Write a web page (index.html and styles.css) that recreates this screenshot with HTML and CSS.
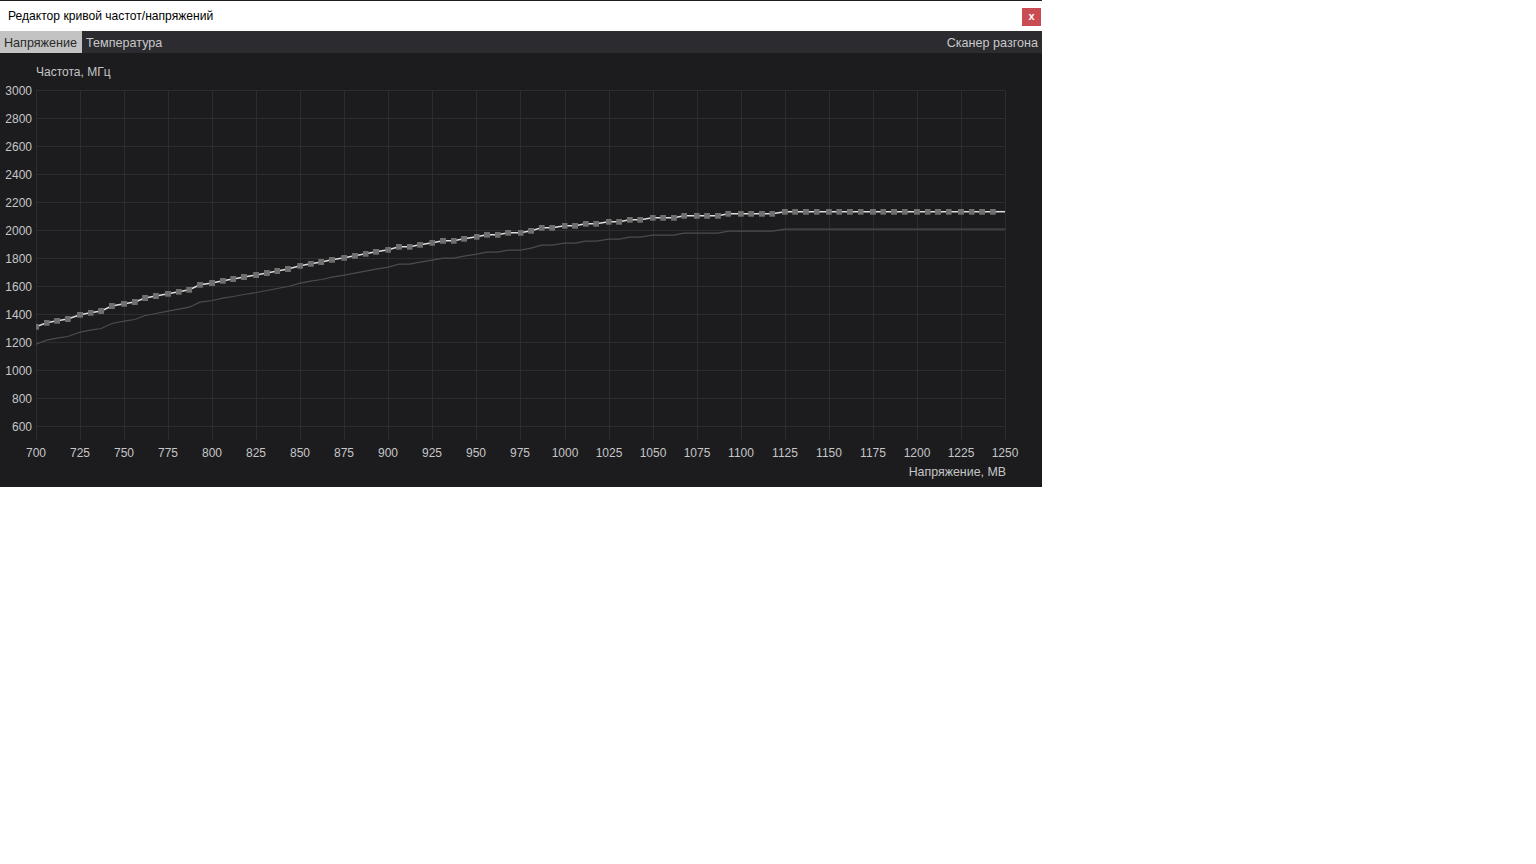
FILE: index.html
```html
<!DOCTYPE html>
<html lang="ru">
<head>
<meta charset="utf-8">
<title>Редактор кривой частот/напряжений</title>
<link rel="stylesheet" href="styles.css">
</head>
<body>
<div class="window">
  <div class="titlebar">
    <span class="title">Редактор кривой частот/напряжений</span>
    <div class="close">x</div>
  </div>
  <div class="tabs">
    <div class="tab active">Напряжение</div>
    <div class="tab">Температура</div>
    <div class="spacer"></div>
    <div class="tab">Сканер разгона</div>
  </div>
  <svg class="chart" width="1042" height="434" viewBox="0 53 1042 434" xmlns="http://www.w3.org/2000/svg">
    <defs>
      <clipPath id="plot"><rect x="36" y="80" width="970" height="370"/></clipPath>
      <marker id="sq" markerWidth="6" markerHeight="6" refX="3" refY="3" markerUnits="userSpaceOnUse" viewBox="0 0 6 6">
        <rect width="6" height="6" class="sqfill"/>
      </marker>
    </defs>
    <path class="grid" d="M36.5 90V440M80.5 90V440M124.5 90V440M168.5 90V440M212.5 90V440M256.5 90V440M300.5 90V440M344.5 90V440M388.5 90V440M432.5 90V440M476.5 90V440M520.5 90V440M565.5 90V440M609.5 90V440M653.5 90V440M697.5 90V440M741.5 90V440M785.5 90V440M829.5 90V440M873.5 90V440M917.5 90V440M961.5 90V440M1005.5 90V440M36 90.5H1006M36 118.5H1006M36 146.5H1006M36 174.5H1006M36 202.5H1006M36 230.5H1006M36 258.5H1006M36 286.5H1006M36 314.5H1006M36 342.5H1006M36 370.5H1006M36 398.5H1006M36 426.5H1006"/>
    <g class="ylabels">
      <text x="32" y="94.5">3000</text>
      <text x="32" y="122.5">2800</text>
      <text x="32" y="150.5">2600</text>
      <text x="32" y="178.5">2400</text>
      <text x="32" y="206.5">2200</text>
      <text x="32" y="234.5">2000</text>
      <text x="32" y="262.5">1800</text>
      <text x="32" y="290.5">1600</text>
      <text x="32" y="318.5">1400</text>
      <text x="32" y="346.5">1200</text>
      <text x="32" y="374.5">1000</text>
      <text x="32" y="402.5">800</text>
      <text x="32" y="430.5">600</text>
    </g>
    <g class="xlabels">
      <text x="36" y="456.5">700</text>
      <text x="80" y="456.5">725</text>
      <text x="124" y="456.5">750</text>
      <text x="168" y="456.5">775</text>
      <text x="212" y="456.5">800</text>
      <text x="256" y="456.5">825</text>
      <text x="300" y="456.5">850</text>
      <text x="344" y="456.5">875</text>
      <text x="388" y="456.5">900</text>
      <text x="432" y="456.5">925</text>
      <text x="476" y="456.5">950</text>
      <text x="520" y="456.5">975</text>
      <text x="565" y="456.5">1000</text>
      <text x="609" y="456.5">1025</text>
      <text x="653" y="456.5">1050</text>
      <text x="697" y="456.5">1075</text>
      <text x="741" y="456.5">1100</text>
      <text x="785" y="456.5">1125</text>
      <text x="829" y="456.5">1150</text>
      <text x="873" y="456.5">1175</text>
      <text x="917" y="456.5">1200</text>
      <text x="961" y="456.5">1225</text>
      <text x="1005" y="456.5">1250</text>
    </g>
    <text class="axis-title" x="36" y="75.5">Частота, МГц</text>
    <text class="axis-title end" x="1006" y="475.5">Напряжение, МВ</text>
    <g clip-path="url(#plot)">
      <polyline class="base-curve" transform="translate(0,17.5)" points="36,326.7 46.6,322.7 57.1,320.7 67.7,319 80,314.7 90.6,312.7 101.2,311 111.8,306 124.1,303.7 134.7,302 145.2,298 155.8,296 168.1,293.7 178.7,291.7 189.3,289.7 199.9,284.7 212.2,283 222.8,280.7 233.3,279 243.9,277 256.2,275 266.8,273 277.4,271 287.9,269 300.3,265.7 310.8,263.7 321.4,262 332,259.7 344.3,257.7 354.9,255.7 365.5,253.7 376,251.7 388.4,249.7 398.9,246.7 409.5,246.7 420.1,244.7 432.4,242.7 443,240.7 453.6,240.7 464.1,238.7 476.5,236.7 487,234.7 497.6,234.7 508.2,232.7 520.5,232.7 531.1,230.7 541.6,227.7 552.2,227.7 564.5,225.7 575.1,225.7 585.7,223.7 596.3,223.7 608.6,221.7 619.2,221.7 629.7,219.7 640.3,219.7 652.6,217.7 663.2,217.7 673.8,217.7 684.3,215.7 696.7,215.7 707.2,215.7 717.8,215.7 728.4,213.7 740.7,213.7 751.3,213.7 761.9,213.7 772.4,213.7 784.8,211.7 1005,211.7"/>
      <polyline class="curve" points="992.7,211.7 1005,211.7"/>
      <polyline class="curve pts" points="36,326.7 46.6,322.7 57.1,320.7 67.7,319 80,314.7 90.6,312.7 101.2,311 111.8,306 124.1,303.7 134.7,302 145.2,298 155.8,296 168.1,293.7 178.7,291.7 189.3,289.7 199.9,284.7 212.2,283 222.8,280.7 233.3,279 243.9,277 256.2,275 266.8,273 277.4,271 287.9,269 300.3,265.7 310.8,263.7 321.4,262 332,259.7 344.3,257.7 354.9,255.7 365.5,253.7 376,251.7 388.4,249.7 398.9,246.7 409.5,246.7 420.1,244.7 432.4,242.7 443,240.7 453.6,240.7 464.1,238.7 476.5,236.7 487,234.7 497.6,234.7 508.2,232.7 520.5,232.7 531.1,230.7 541.6,227.7 552.2,227.7 564.5,225.7 575.1,225.7 585.7,223.7 596.3,223.7 608.6,221.7 619.2,221.7 629.7,219.7 640.3,219.7 652.6,217.7 663.2,217.7 673.8,217.7 684.3,215.7 696.7,215.7 707.2,215.7 717.8,215.7 728.4,213.7 740.7,213.7 751.3,213.7 761.9,213.7 772.4,213.7 784.8,211.7 795.3,211.7 805.9,211.7 816.5,211.7 828.8,211.7 839.4,211.7 849.9,211.7 860.5,211.7 872.9,211.7 883.4,211.7 894,211.7 904.6,211.7 916.9,211.7 927.5,211.7 938,211.7 948.6,211.7 960.9,211.7 971.5,211.7 982.1,211.7 992.7,211.7"/>
    </g>
  </svg>
</div>
</body>
</html>
```

FILE: styles.css
```css
html, body {
  margin: 0;
  padding: 0;
  background: #ffffff;
}

.window {
  width: 1042px;
  display: flex;
  flex-direction: column;
  font-family: "Liberation Sans", Arial, sans-serif;
  font-size: 12px;
}

.titlebar {
  height: 30px;
  border-top: 1px solid #1f1f1f;
  background: #ffffff;
  display: flex;
  align-items: center;
  padding-left: 8px;
  padding-right: 1px;
}

.title {
  color: #000000;
  flex: 1;
  font-size: 12.1px;
}

.close {
  width: 19px;
  height: 18px;
  background: #c94c52;
  color: #ffffff;
  font-weight: bold;
  font-size: 11px;
  line-height: 17px;
  text-align: center;
  margin-top: 1px;
}

.tabs {
  height: 22px;
  background: #2b2b30;
  display: flex;
  align-items: stretch;
}

.tab {
  padding: 1px 4px 0;
  line-height: 23px;
  color: #c8c8c8;
  font-size: 12.6px;
  white-space: nowrap;
  height: 21px;
}

.tab.active {
  background: #c3c3c3;
  color: #2a2a2a;
  padding-right: 5px;
}

.spacer {
  flex: 1;
}

.chart {
  display: block;
  background: #1c1c1f;
}

.grid {
  stroke: #2d2d30;
  stroke-width: 1;
  fill: none;
}

.ylabels text,
.xlabels text,
.axis-title {
  font-family: "Liberation Sans", Arial, sans-serif;
  font-size: 12px;
  fill: #c6c6c6;
}

.axis-title.end {
  font-size: 12.4px;
  text-anchor: end;
}

.ylabels text {
  text-anchor: end;
}

.xlabels text {
  text-anchor: middle;
}

.base-curve {
  fill: none;
  stroke: #4c4c4e;
  stroke-width: 1.2;
}

.curve {
  fill: none;
  stroke: #dedede;
  stroke-width: 1.5;
}

.curve.pts {
  marker-start: url(#sq);
  marker-mid: url(#sq);
  marker-end: url(#sq);
}

.sqfill {
  fill: #6f6f70;
}
```
